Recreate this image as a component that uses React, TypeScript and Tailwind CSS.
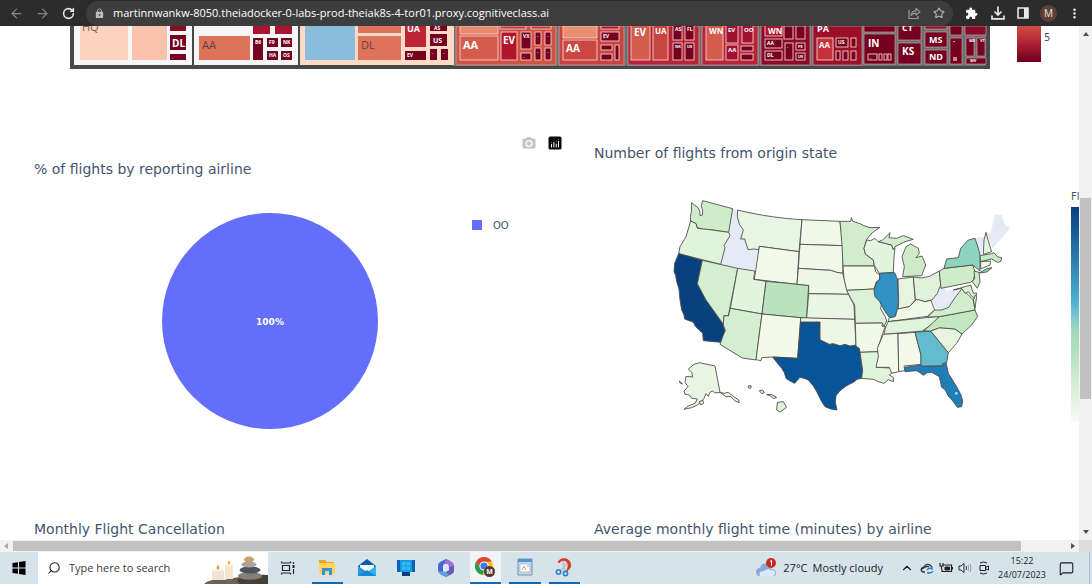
import React from "react";
import { ArrowLeft, ArrowRight, RotateCw, Star, Search, ChevronUp, MessageSquare } from "lucide-react";
import { MdLock, MdExtension, MdMoreVert } from "react-icons/md";

type Box = [number, number, number, number, string, string?, number?, string?];

const D = "#75001f";
const W = "#ffffff";

const sections: Box[] = [
  [74, 26, 118, 39, "#f7f6f6"],
  [194, 26, 104, 39, "#f7f6f6"],
  [300, 26, 154, 39, "#fbdac6"],
  [456, 26, 100, 39, "#cf5246"],
  [559, 26, 65, 39, "#c84440"],
  [628, 26, 71, 39, "#b3243a"],
  [702, 26, 56, 39, "#b8233a"],
  [761, 26, 49, 39, "#8b0a27"],
  [813, 26, 49, 39, "#9b1028"],
  [864, 26, 31, 6, D],
  [864, 34, 31, 30, D],
  [898, 26, 23, 14, D],
  [898, 43, 23, 21, D],
  [925, 26, 22, 3, "#9b1028"],
  [925, 32, 22, 15, D],
  [925, 50, 22, 14, D],
  [950, 26, 12, 9, D],
  [950, 38, 12, 26, D],
  [965, 26, 21, 9, "#8b0a27"],
  [966, 38, 8, 18, D],
  [977, 38, 8, 18, D],
  [966, 58, 20, 6, D],
];

const plainTiles: Box[] = [
  [80, 26, 48, 34, "#fdd2bf"],
  [132, 26, 35, 34, "#f8c3aa"],
  [170, 26, 16, 5, "#8b0a27"],
  [170, 35, 16, 15, D, "DL", 10],
  [170, 54, 16, 6, D, "-", 4],
  [199, 36, 51, 24, "#de735c", "AA", 11, "#5b4540"],
  [253, 26, 17, 8, "#a91530"],
  [275, 26, 17, 8, "#a91530"],
  [253, 38, 10, 22, D, "B6", 5],
  [267, 38, 11, 9, D, "F9", 5],
  [281, 38, 11, 9, D, "NK", 5],
  [267, 51, 11, 9, D, "HA", 5],
  [281, 51, 11, 9, D, "OS", 5],
  [305, 26, 50, 34, "#89bddb"],
  [358, 26, 43, 7, "#df725b"],
  [358, 36, 43, 24, "#df725b", "DL", 11, "#5b4540"],
  [405, 26, 21, 21, "#bd2536"],
  [405, 51, 21, 9, D, "EV", 5],
  [430, 26, 17, 5, D],
  [430, 34, 17, 12, D, "US", 7],
  [430, 49, 7, 11, D, "-", 4],
  [441, 49, 7, 11, D, "-", 4],
];

const linedTiles: Box[] = [
  [460, 26, 38, 8, "#e58a6d"],
  [460, 36, 38, 24, "#d35c4c", "AA", 11],
  [500, 26, 26, 3, "#c23a3c"],
  [531, 26, 20, 3, "#c23a3c"],
  [501, 32, 16, 28, "#b0172c", "EV", 10],
  [521, 32, 10, 17, D, "VX", 5],
  [521, 53, 10, 7, D, "-", 4],
  [535, 32, 6, 13, D, "-", 4],
  [545, 32, 6, 13, D, "-", 4],
  [535, 48, 6, 12, D, "-", 4],
  [545, 48, 6, 12, D, "-", 4],
  [563, 26, 34, 12, "#e88f70"],
  [563, 40, 34, 20, "#cc4743", "AA", 10],
  [601, 26, 18, 3, "#a01030"],
  [601, 32, 18, 9, D, "EV", 5],
  [601, 45, 11, 5, D],
  [601, 54, 11, 6, D],
  [615, 45, 4, 15, D],
  [631, 20, 19, 40, "#d35c4c", "EV", 10],
  [653, 20, 15, 40, "#c74640", "UA", 8],
  [673, 20, 9, 20, D],
  [685, 20, 9, 20, D],
  [673, 43, 9, 17, D, "NK", 4],
  [685, 43, 9, 17, D, "US", 4],
  [706, 20, 17, 40, "#d35c4c", "WN", 8],
  [726, 20, 12, 23, "#a01030", "EV", 6],
  [742, 20, 11, 23, "#a01030", "OO", 6],
  [726, 45, 12, 15, "#a01030", "AA", 6],
  [741, 46, 12, 5, D],
  [741, 54, 12, 6, D],
  [765, 20, 17, 16, "#a91530", "WN", 8],
  [765, 39, 17, 9, D, "AA", 5],
  [765, 51, 17, 9, D, "DL", 5],
  [784, 26, 9, 13, D],
  [796, 26, 9, 13, D],
  [785, 43, 8, 17, D, "-", 4],
  [796, 43, 9, 7, D, "F9", 4],
  [796, 53, 9, 7, D, "US", 4],
  [817, 38, 16, 22, "#c5303a", "AA", 8],
  [836, 38, 12, 9, D, "US", 5],
  [851, 38, 5, 9, D],
  [836, 51, 4, 9, D],
  [843, 51, 5, 9, D],
  [851, 51, 5, 9, D],
  [868, 54, 9, 6, D, "-", 4],
  [879, 54, 3, 6, D],
  [884, 54, 3, 6, D],
  [888, 54, 3, 6, D],
];

const stateLabels: [number, number, string, number, string][] = [
  [82, 31, "HQ", 11, "#75605a"],
  [407, 32, "UA", 9, W],
  [434, 30, "AS", 5, W],
  [675, 31, "AS", 5, W],
  [687, 31, "FL", 5, W],
  [817, 32, "PA", 9, W],
  [868, 47, "IN", 10, W],
  [902, 31, "CT", 9, W],
  [902, 55, "KS", 10, W],
  [929, 43, "MS", 9, W],
  [929, 60, "ND", 9, W],
  [953, 43, "-", 6, W],
  [953, 61, "II", 6, W],
  [969, 42, "ME", 4, W],
  [980, 42, "VT", 4, W],
  [970, 62, "WV", 4, W],
];

function TileLabel({ b }: { b: Box }) {
  if (!b[5]) return null;
  const size = b[6] ?? 8;
  const tall = b[1] < 26;
  return (
    <text
      x={b[0] + (size > 5 && b[2] > 16 ? 3 : 2)}
      y={(tall ? 26 : b[1]) + (tall ? size : size + (size > 6 ? 2 : 1))}
      fontSize={size}
      fontWeight={b[7] ? 400 : 700}
      fill={b[7] ?? W}
    >
      {b[5]}
    </text>
  );
}

function Treemap() {
  return (
    <svg viewBox="70 26 920 43" className="h-[43px] w-[920px] shrink-0" fontFamily="'Open Sans', sans-serif" role="img" aria-label="Treemap of flights by state and airline">
      <rect x="70" y="26" width="920" height="43" fill="#484848" />
      <rect x="452" y="26" width="534" height="40" fill="#6e6e6e" />
      {sections.map((b, i) => (
        <rect key={i} x={b[0]} y={b[1]} width={b[2]} height={b[3]} fill={b[4]} stroke={i > 2 ? "#e5c9c9" : "none"} strokeWidth="0.5" />
      ))}
      {plainTiles.map((b, i) => (
        <g key={i}>
          <rect x={b[0]} y={b[1]} width={b[2]} height={b[3]} fill={b[4]} />
          <TileLabel b={b} />
        </g>
      ))}
      {linedTiles.map((b, i) => (
        <g key={i}>
          <rect x={b[0]} y={b[1]} width={b[2]} height={b[3]} fill={b[4]} stroke="#f5cdc6" strokeWidth="0.9" />
          <TileLabel b={b} />
        </g>
      ))}
      {stateLabels.map((t, i) => (
        <text key={i} x={t[0]} y={t[1]} fontSize={t[3]} fill={t[4]} fontWeight={t[4] === W ? 700 : 400}>
          {t[2]}
        </text>
      ))}
    </svg>
  );
}

const states: [string, string][] = [
  ["#cfecc9", "M95,52L103,60L112,66L119,76L120,92L127,90L128,76L124,62L128,47L218,71L206,142L150,134L130,133L112,128L108,116L92,108L91,97L94,80Z"],
  ["#e0f3db", "M92,108L108,116L112,130L150,134L206,142L210,152L192,182L195,188L182,238L56,206L60,185L78,155Z"],
  ["#08417f", "M56,206L127,226L112,296L138,345L188,415L196,438L190,450L182,472L130,467L128,445L106,424L100,412L74,402L72,390L65,375L60,345L57,312L50,290L47,272L42,258L44,235Z"],
  ["#d5eecf", "M127,226L233,250L205,393L192,392L190,420L188,415L138,345L112,296Z"],
  ["#e8f5e2", "M233,75C300,92 380,102 426,104L417,200L298,184L296,194L280,192L264,194L254,162L242,162L250,135L238,118L232,95Z"],
  ["#f3f9e9", "M298,184L417,200L411,298L283,283Z"],
  ["#e3f4de", "M233,250L284,258L281,283L318,289L306,387L211,370Z"],
  ["#b8e3bd", "M318,289L446,301L440,400L306,387Z"],
  ["#d5eecf", "M211,370L306,387L288,525L247,519L180,478L190,450L196,436L190,420L192,392L205,393Z"],
  ["#f3f9e9", "M306,387L422,398L413,520L338,516L305,518L303,527L288,524Z"],
  ["#075499", "M422,411L480,411L480,464L508,478L520,476L540,482L555,478L570,483L588,480L600,490L602,525L608,555L605,580L592,583L580,592L560,602L540,617L528,632L526,652L531,675L512,672L495,665L485,650L480,640L470,620L460,603L445,585L432,580L420,577L404,595L390,588L378,580L373,563L365,550L350,532L338,516L413,520Z"],
  ["#f0f8e8", "M426,104L540,109L545,150L549,182L420,178Z"],
  ["#f0f8e8", "M420,178L549,182L549,243L548,265L530,262L512,256L415,250Z"],
  ["#eef7e6", "M415,250L512,256L530,262L548,265L560,310L566,328L446,326L446,301L411,298Z"],
  ["#eaf6e4", "M446,326L566,328L572,340L582,360L584,403L440,400Z"],
  ["#eef7e6", "M422,398L584,403L588,480L570,483L555,478L540,482L520,476L508,478L480,464L480,411L422,411Z"],
  ["#d2edcc", "M540,109L572,109L574,98L579,109L600,116L612,122L630,128L660,127L645,137L632,148L620,163L612,190L616,207L640,225L643,243L549,243L546,180Z"],
  ["#f3f9e9", "M549,243L643,243L648,262L660,270L658,285L648,292L642,312L560,316L552,280Z"],
  ["#dcf1d6", "M560,316L642,312L648,330L664,358L662,372L676,395L680,408L672,424L666,414L586,415L584,360L572,340Z"],
  ["#f0f8e8", "M586,415L668,414L666,424L676,424L668,445L657,480L655,500L600,502L598,490L588,484Z"],
  ["#e0f3db", "M600,502L655,500L656,520L650,547L693,549L697,562L688,570L700,577L700,590L685,584L672,595L655,590L640,583L605,580L608,555Z"],
  ["#e3f4de", "M620,165L632,167L645,160L655,170L695,180L700,192L705,188L702,215L700,262L658,265L643,242L640,225L616,207L612,190Z"],
  ["#d2edcc", "M655,170L668,165L690,143L687,158L710,160L730,152L760,163L735,170L705,185L700,195L695,180Z"],
  ["#cfecc9", "M728,275L733,245L726,215L738,185L752,177L775,190L778,205L768,218L786,213L797,240L785,272Z"],
  ["#3292c5", "M658,265L704,263L712,282L716,350L712,370L706,395L688,398L672,375L660,350L645,335L642,318L650,290L660,282Z"],
  ["#e6f5e0", "M714,282L760,276L766,345L748,365L715,372L716,350Z"],
  ["#dff2d9", "M760,276L785,279L808,274L838,258L842,300L832,325L816,345L795,350L766,343Z"],
  ["#f0f8e8", "M684,410L688,398L706,395L712,372L748,365L770,343L795,350L813,346L824,375L802,394Z"],
  ["#e0f3db", "M684,410L836,394L828,410L806,425L788,438L672,448L676,430Z"],
  ["#f3f9e9", "M670,448L714,445L716,560L695,565L688,547L648,547L655,515L652,490Z"],
  ["#f3f9e9", "M714,446L765,442L783,510L783,538L732,543L735,557L716,560Z"],
  ["#63bccd", "M765,442L812,438L865,503L860,533L845,542L788,544L783,538L783,510Z"],
  ["#1f7db7", "M735,547L783,540L788,544L845,544L848,536L858,533L865,565L890,605L903,630L908,648L905,665L892,667L880,650L865,633L856,615L845,607L838,575L815,562L802,563L790,571L780,563L770,557L735,560Z"],
  ["#e6f5e0", "M812,438L838,428L862,430L885,432L906,447L890,475L865,503Z"],
  ["#c3e7c0", "M790,437L806,425L838,395L945,375L953,395L935,420L906,447L885,432L838,428L812,438Z"],
  ["#d2edcc", "M802,396L824,375L845,375L866,367L880,345L905,312L920,325L940,345L945,375L838,395Z"],
  ["#cfecc9", "M838,258L852,250L938,240L946,262L940,285L932,292L843,310Z"],
  ["#8cd4bd", "M852,250L860,222L895,218L902,190L925,165L945,160L955,190L960,210L960,258L938,240Z"],
  ["#e8f5e2", "M978,142L984,165L995,200L970,208L972,165Z"],
  ["#c6e9c2", "M960,212L995,206L1002,203L1012,215L1025,218L1022,230L1012,232L995,222L962,230Z"],
  ["#f0f8e8", "M962,230L992,228L990,240L962,252Z"],
  ["#8cd4bd", "M957,264L978,252L996,248L980,261Z"],
  ["#cfecc9", "M942,258L957,262L960,290L952,310L937,290L944,280Z"],
  ["#d9f0d3", "M880,315L932,300L940,325L950,324L947,342L935,334L925,320L915,325L905,310Z"],
  ["#d2edcc", "M940,345L946,330L950,335L945,370Z"],
  ["#e8f5e2", "M85,552L102,538L118,533L165,543L180,622L165,624L158,618L150,622L145,634L138,626L132,640L122,652L112,660L95,668L72,673L85,663L105,655L112,642L95,640L88,630L75,628L72,618L84,605L75,592L78,574L98,576L95,562Z"],
  ["#eef7e6", "M180,622L192,625L205,622L220,634L236,645L238,653L225,648L212,634L198,635Z"],
  ["#eef7e6", "M58,588L68,597L60,594Z"],
  ["#dff2d9", "M118,650L128,645L131,655L122,660Z"],
  ["#dff2d9", "M352,652L370,650L380,667L360,681L350,675Z"],
  ["#dff2d9", "M265,602L274,603L272,610L265,608Z"],
  ["#dff2d9", "M298,617L308,615L313,623L305,626Z"],
  ["#dff2d9", "M320,629L334,628L350,637L341,641L332,633Z"],
];

const missing = [
  "M218,71L233,75L232,95L238,118L250,135L242,162L254,162L264,194L296,192L284,258L182,238L195,188L192,182L210,152L206,142Z",
  "M835,325L842,300L860,318L905,308L880,345L866,367L845,375L825,368L816,345Z",
  "M980,146L992,145L1005,88L1025,90L1034,118L1050,130L1020,165L998,190Z",
  "M945,160L972,155L967,206L960,210Z",
];

function UsMap() {
  return (
    <svg viewBox="0 0 1080 720" className="h-60 w-[360px] shrink-0" role="img" aria-label="Map of flights from origin state">
      {missing.map((d) => (
        <path key={d} d={d} fill="#e4eaf6" />
      ))}
      {states.map(([fill, d]) => (
        <path key={d} d={d} fill={fill} stroke="#4a4a4a" strokeWidth="2.6" strokeLinejoin="round" />
      ))}
      <circle cx="889" cy="625" r="4" fill="#b9dff0" />
    </svg>
  );
}

function BrowserBar() {
  return (
    <header className="flex h-[26px] shrink-0 items-center bg-[#2c2c2c] text-[#e8e8e8]">
      <button aria-label="Back" className="ml-2 flex w-4 justify-center text-[#858585]"><ArrowLeft size={15} /></button>
      <button aria-label="Forward" className="ml-[10px] flex w-4 justify-center text-[#858585]"><ArrowRight size={15} /></button>
      <button aria-label="Reload" className="ml-[10px] flex w-4 justify-center"><RotateCw size={13} strokeWidth={2.8} /></button>
      <div className="ml-[10px] flex h-[25px] min-w-0 flex-1 items-center rounded-full bg-[#3d3d3d] pl-2">
        <MdLock size={11} className="shrink-0 text-[#bdbdbd]" />
        <input
          aria-label="Address"
          readOnly
          defaultValue="martinnwankw-8050.theiadocker-0-labs-prod-theiak8s-4-tor01.proxy.cognitiveclass.ai"
          className="ml-2 h-5 min-w-0 flex-1 bg-transparent font-['Open_Sans',sans-serif] text-[11px] leading-5 font-normal text-white outline-none"
        />
        <button aria-label="Share" className="mr-3 text-[#9a9a9a]">
          <svg viewBox="0 0 14 14" className="size-[14px]" fill="none" stroke="currentColor" strokeWidth="1.2">
            <path d="M2 4V12.5H11V10" />
            <path d="M4 9.5C4.5 6 7 4.800 9 4.800V2.500L13 5.900L9 9V7.200C7 7.200 5.500 7.500 4 9.500Z" strokeLinejoin="round" />
          </svg>
        </button>
        <button aria-label="Bookmark" className="mr-2 text-[#b9b9b9]"><Star size={12} strokeWidth={2.2} /></button>
      </div>
      <button aria-label="Extensions" className="ml-3 text-white"><MdExtension size={13} /></button>
      <button aria-label="Downloads" className="ml-[13px]">
        <svg viewBox="0 0 14 14" className="size-[14px]" fill="none" stroke="currentColor" strokeWidth="1.7">
          <path d="M7 0.500V8.500M3.500 5.500L7 9L10.500 5.500M1 9.500V12.800H13V9.500" />
        </svg>
      </button>
      <button aria-label="Side panel" className="ml-3">
        <svg viewBox="0 0 12 12" className="size-3">
          <path d="M1 1H11V11H1Z" fill="none" stroke="currentColor" strokeWidth="1.600" />
          <path d="M7 1H11V11H7Z" fill="currentColor" />
        </svg>
      </button>
      <button aria-label="Profile" className="ml-[11px] size-[17px] rounded-full bg-[#5d4037] font-['Open_Sans',sans-serif] text-[10px] leading-[17px] text-[#f0e6e2]">M</button>
      <button aria-label="Menu" className="mx-[10px]"><MdMoreVert size={15} /></button>
    </header>
  );
}

function Dashboard() {
  return (
    <main className="min-w-0 flex-1 overflow-hidden bg-white font-['DejaVu_Sans',sans-serif] text-[#44546c]">
      <section className="flex pl-[70px]">
        <Treemap />
        <div className="ml-[27px] h-9 w-6 shrink-0 bg-linear-to-b from-[#cf4f48] via-[#ad1f32] to-[#6d001f]" />
        <span className="ml-[3px] pt-1 text-[10px] leading-4">5</span>
      </section>
      <div className="grid grid-cols-[minmax(0,560fr)_minmax(0,485fr)] pl-[34px]">
        <section className="h-[452px]">
          <div className="flex items-center justify-end gap-3 pt-[67px] pr-8">
            <button aria-label="Download plot as a png" className="text-[#c4c4c4]">
              <svg viewBox="0 0 14 14" className="size-[14px]" fill="currentColor">
                <path fillRule="evenodd" d="M4.500 2L5.200 1H8.800L9.500 2.500H12Q13.500 2.500 13.500 4V11Q13.500 12.500 12 12.500H2Q0.500 12.500 0.500 11V4Q0.500 2.500 2 2.500H4.300ZM7 4A3.500 3.500 0 1 0 7 11A3.500 3.500 0 1 0 7 4ZM7 5.300A2.200 2.200 0 1 1 7 9.700A2.200 2.200 0 1 1 7 5.300Z" />
                <circle cx="7" cy="7.500" r="1" />
              </svg>
            </button>
            <button aria-label="Produced with Plotly">
              <svg viewBox="0 0 14 14" className="size-[14px]">
                <rect x="0.500" y="0.500" width="13" height="13" rx="1.500" fill="#0a0a0a" />
                <path d="M3.500 8.500V11M5.800 6.500V11M8.200 8V11M10.500 5.500V11" stroke="#fff" strokeWidth="1" strokeLinecap="round" />
                <path d="M3.500 6.200V6.300M5.800 4.200V4.300M8.200 5.700V5.800M10.500 3.200V3.300" stroke="#999" strokeWidth="0.900" strokeLinecap="round" />
              </svg>
            </button>
          </div>
          <h2 className="mt-[11px] text-[14px] leading-4">% of flights by reporting airline</h2>
          <div className="mt-9 flex pl-32">
            <svg viewBox="0 0 216 216" className="size-[216px] shrink-0" role="img" aria-label="Pie chart">
              <circle cx="108" cy="108" r="108" fill="#636efa" />
              <text x="108" y="112" textAnchor="middle" fontSize="9" fontWeight="700" fill="#fff" fontFamily="'DejaVu Sans', sans-serif">100%</text>
            </svg>
            <div className="mt-1 ml-[94px] flex h-4 items-center gap-[11px] text-[10px]">
              <span className="size-[10px] bg-[#636efa]" />
              OO
            </div>
          </div>
        </section>
        <section className="h-[452px] overflow-hidden pt-[76px]">
          <h2 className="text-[14px] leading-4">Number of flights from origin state</h2>
          <div className="mt-6 flex pl-[66px]">
            <UsMap />
            <div className="ml-auto w-2 shrink-0 overflow-hidden pt-1 text-[10px] leading-4 whitespace-nowrap">
              Fl
              <div className="mt-0.5 h-[215px] bg-linear-to-b from-[#084081] via-[#4eb3d3] via-45% to-[#f7fcf0]">
                <div className="h-full bg-linear-to-b from-transparent from-45% via-[#a8ddb5] via-62% to-[#f7fcf0]" />
              </div>
            </div>
          </div>
        </section>
        <h2 className="text-[14px] leading-4">Monthly Flight Cancellation</h2>
        <h2 className="text-[14px] leading-4 whitespace-nowrap">Average monthly flight time (minutes) by airline</h2>
      </div>
    </main>
  );
}

const Triangle = ({ d, className = "text-[#505050]" }: { d: string; className?: string }) => (
  <svg viewBox="0 0 8 8" className={"size-2 shrink-0 " + className} fill="currentColor"><path d={d} /></svg>
);

function Icon({ name }: { name: string }) {
  switch (name) {
    case "Task View":
      return (
        <svg viewBox="0 0 16 16" className="size-4" fill="none" stroke="#222" strokeWidth="1.200">
          <path d="M1.500 3H10.500M1.500 13H10.500M2.500 5.500H9.500V10.500H2.500ZM1.500 1.500V3M10.500 1.500V3M1.500 13V14.500M10.500 13V14.500M13.500 2V4M13.500 9V14" />
          <path d="M12.500 5H14.500V8H12.500Z" fill="#222" stroke="none" />
        </svg>
      );
    case "File Explorer":
      return (
        <svg viewBox="0 0 18 18" className="size-[18px]">
          <path d="M1 2H7L9 4H16V15H1Z" fill="#e9a91f" />
          <path d="M1 5H17V16H1Z" fill="#ffd55d" />
          <path d="M4 10H14V17H11V13H7V17H4Z" fill="#3a91d8" />
        </svg>
      );
    case "Mail":
      return (
        <svg viewBox="0 0 20 20" className="size-5">
          <path d="M1 8L10 1L19 8V18H1Z" fill="#0f5da8" />
          <path d="M3 7H17V15H3Z" fill="#f4fbff" />
          <path d="M1 8L10 14L1 18Z" fill="#1d9be0" />
          <path d="M19 8L10 14L19 18Z" fill="#29b6f0" />
          <path d="M1 18L10 12L19 18Z" fill="#1688d2" />
        </svg>
      );
    case "My PC":
      return (
        <svg viewBox="0 0 20 20" className="size-5">
          <path d="M1 2H19V14H1Z" fill="#0c62b3" />
          <path d="M6 14H14V18H6Z" fill="#083e80" />
          <path d="M4 2H16V14H4Z" fill="#159be0" />
          <path d="M6 4H9.500V7.500H6ZM10.500 4H14V7.500H10.500ZM6 8.500H9.500V12H6ZM10.500 8.500H14V12H10.500Z" fill="#38b8f0" />
        </svg>
      );
    case "Microsoft 365":
      return (
        <svg viewBox="0 0 20 20" className="size-5">
          <path d="M10 1L4 4Q2 5 2 8V13L7 15V7L14 3Z" fill="#4b64cf" />
          <path d="M10 1L16 4Q18 5 18 8V12L12 9V6L8 6Z" fill="#9b72d4" />
          <path d="M18 8V13Q18 15 16 16L10 19L4 16L2 13L9 14L13 12V9Z" fill="#655dbc" />
          <path d="M2 13L9 14L13 16L10 19L4 16Z" fill="#5ea2e6" />
          <path d="M7 8L10 6L13 8V12L10 14L7 12Z" fill="#dbe7ee" />
        </svg>
      );
    case "Chrome":
      return (
        <svg viewBox="0 0 22 22" className="size-[22px]">
          <circle cx="10" cy="10" r="9" fill="#fbc116" />
          <path d="M2.200 5.500A9 9 0 0 1 17.800 5.500L10 6L6 12Z" fill="#dd4336" />
          <path d="M2.200 5.500L6.500 12.500L10 14L8.500 19A9 9 0 0 1 2.200 5.500Z" fill="#279c52" />
          <circle cx="10" cy="10" r="4.600" fill="#fff" />
          <circle cx="10" cy="10" r="3.600" fill="#377fe7" />
          <circle cx="15.500" cy="15.500" r="5.500" fill="#54382e" />
          <text x="15.500" y="18" textAnchor="middle" fontSize="7" fontWeight="700" fill="#fff" fontFamily="'Open Sans', sans-serif">M</text>
        </svg>
      );
    case "Document":
      return (
        <svg viewBox="0 0 18 20" className="h-5 w-[18px]">
          <path d="M2 2H16V18H2Z" fill="#c9d8e6" stroke="#7590a9" />
          <path d="M2 2H16V5H2Z" fill="#4c97cb" />
          <path d="M4 7H14V15H4Z" fill="#fff" stroke="#8db1ce" strokeWidth="0.700" />
          <path d="M6 13L8 9L10 13" stroke="#d88a5c" strokeWidth="0.900" fill="none" />
          <path d="M11 9H13" stroke="#6597bb" />
        </svg>
      );
    default:
      return (
        <svg viewBox="0 0 20 20" className="size-5" fill="none">
          <path d="M4 5C6 1 13 0 16 5C18 10 15 13 12 15C14 11 15 8 13 5C11 3 7 3 5 6Z" fill="#cf3d28" stroke="#cf3d28" strokeWidth="0.800" />
          <path d="M9 5L11 15M13 6L6 15" stroke="#b7c1ca" strokeWidth="1.500" />
          <circle cx="4.500" cy="15" r="2.200" stroke="#2e82c9" strokeWidth="1.600" />
          <circle cx="11.500" cy="16.500" r="2.100" stroke="#2e82c9" strokeWidth="1.600" />
        </svg>
      );
  }
}

const apps: [string, string][] = [
  ["Task View", ""],
  ["File Explorer", "border-b-2 border-[#1269b5]"],
  ["Mail", ""],
  ["My PC", ""],
  ["Microsoft 365", ""],
  ["Chrome", "border-b-2 border-[#1269b5] bg-[#f0f5f8]"],
  ["Document", "border-b-2 border-[#1269b5]"],
  ["Snipping Tool", "border-b-2 border-[#1269b5]"],
];

function Taskbar() {
  return (
    <footer className="flex h-8 shrink-0 items-center bg-[#d6e3ea] font-['Open_Sans',sans-serif] text-[#1b1b1b]">
      <button aria-label="Start" className="flex w-[38px] shrink-0 justify-center">
        <svg viewBox="0 0 14 14" className="size-[14px]"><path d="M0.500 2L6 1.200V6.600H0.500ZM7 1L13.500 0V6.600H7ZM0.500 7.400H6V12.800L0.500 12ZM7 7.400H13.500V14L7 13Z" /></svg>
      </button>
      <label className="flex h-8 w-[230px] shrink-0 items-center bg-white pl-[9px]">
        <Search size={14} strokeWidth={1.8} className="shrink-0 -scale-x-100" />
        <input aria-label="Search" placeholder="Type here to search" className="ml-2 min-w-0 flex-1 text-[11px] outline-none placeholder:text-[#3b3b3b]" />
        <svg viewBox="0 0 64 32" className="h-8 w-16 shrink-0">
          <path d="M0 32Q6 26 20 28Q35 24 64 23V32Z" fill="#6c6256" />
          <path d="M33 27Q50 22 64 23V32H35Z" fill="#463f36" />
          <path d="M8 18H20V28H8Z" fill="#efe3d3" />
          <path d="M21 13H29V27H21Z" fill="#f5e5cd" />
          <ellipse cx="14" cy="18" rx="6" ry="1.500" fill="#fff6df" />
          <ellipse cx="25" cy="13" rx="4" ry="1.200" fill="#fff6df" />
          <path d="M14 18Q11 15.500 14 13Q17 15.500 14 18M25 13Q23 10.500 25 8.500Q27 10.500 25 13" fill="#f29b38" />
          <ellipse cx="46" cy="24" rx="12" ry="3.800" fill="#827f7b" />
          <ellipse cx="46" cy="18" rx="10.500" ry="3.500" fill="#4f535a" />
          <ellipse cx="45" cy="12.500" rx="7.500" ry="3" fill="#a7a39d" />
          <ellipse cx="45" cy="7.500" rx="5" ry="3" fill="#cc9e68" />
        </svg>
      </label>
      <nav className="grid h-8 w-[316px] shrink-0 grid-cols-8">
        {apps.map(([name, cls]) => (
          <button key={name} aria-label={name} className={"mx-1 flex items-center justify-center " + cls}><Icon name={name} /></button>
        ))}
      </nav>
      <button className="ml-auto flex shrink-0 items-center gap-[5px] text-[11px] whitespace-nowrap">
        <svg viewBox="0 0 22 22" className="size-[22px]">
          <path d="M4 19A4 4 0 0 1 4 11Q6 5 11 7Q15 8 15 12Q20 12 20 16Q20 19 17 19Z" fill="#88abdf" />
          <path d="M4 19Q2 14 8 14Q12 11 15 13Q20 13 19 17L17 19Z" fill="#dce9fa" />
          <circle cx="15" cy="6" r="5" fill="#c52b22" />
          <path d="M14 4.500L15.500 3.300V8.500" stroke="#fff" fill="none" />
        </svg>
        <span>27°C</span>
        <span>Mostly cloudy</span>
      </button>
      <button aria-label="Show hidden icons" className="ml-[17px] shrink-0"><ChevronUp size={14} strokeWidth={2} /></button>
      <button aria-label="OneDrive" className="ml-1.5 shrink-0">
        <svg viewBox="0 0 14 14" className="size-[14px]" fill="none" stroke="#333" strokeWidth="1.300">
          <path d="M5 11H3Q0.500 10 1.500 7.500Q3 6 4 6Q6 2 10 4L12 6M2 8Q7 4 9 6" />
          <path d="M7 9Q9 6 12 8V6M13 10Q11 13 8 11.500V13" stroke="#2378bd" />
        </svg>
      </button>
      <button aria-label="Battery" className="ml-[5px] shrink-0">
        <svg viewBox="0 0 14 12" className="h-3 w-[14px]" fill="none" stroke="#222">
          <path d="M4 3H12.500V9.500H3V7M13.500 5V7.500M1 1V4H4V1M2.500 4V7" strokeWidth="1.200" />
          <path d="M6 5H10.500V8H6Z" fill="#222" />
        </svg>
      </button>
      <button aria-label="Volume" className="ml-[5px] shrink-0">
        <svg viewBox="0 0 14 12" className="h-3 w-[14px]" fill="none" stroke="#333">
          <path d="M1 4H3L6 1.500V10.500L3 8H1Z" />
          <path d="M8 4Q9 6 8 8" />
          <path d="M10 3Q11.500 6 10 9M12 2Q14 6 12 10" stroke="#929ba0" />
        </svg>
      </button>
      <button aria-label="Meet now" className="ml-[6px] shrink-0">
        <svg viewBox="0 0 12 14" className="h-[14px] w-3" fill="none" stroke="#222">
          <path d="M2 4.500H7.500V9.500H2ZM7.500 6.500L10.500 5V9L7.500 7.800M2 2Q5 0 9 2M2 12Q5 14 9 12" />
        </svg>
      </button>
      <time className="ml-[7px] w-[50px] shrink-0 text-center text-[9px] leading-[14px] whitespace-nowrap">15:22<br />24/07/2023</time>
      <button aria-label="Notifications" className="mr-[15px] ml-3 shrink-0"><MessageSquare size={15} strokeWidth={1.7} /></button>
      <span className="mr-[2px] h-8 w-px bg-[#aebdc5]" />
    </footer>
  );
}

export default function App() {
  return (
    <div className="flex h-screen w-full flex-col overflow-hidden">
      <BrowserBar />
      <div className="flex min-h-0 flex-1">
        <Dashboard />
        <div className="flex w-[13px] shrink-0 flex-col items-center bg-[#f1f1f1] py-1">
          <Triangle d="M1 6L4 2L7 6Z" />
          <div className="grow-[160]" />
          <div className="w-[11px] grow-[201] bg-[#c1c1c1]" />
          <div className="grow-[129]" />
          <Triangle d="M1 2L4 6L7 2Z" />
        </div>
      </div>
      <div className="flex h-3 shrink-0 bg-[#f1f1f1]">
        <div className="flex flex-1 items-center px-[2px]">
          <Triangle d="M6 1L2 4L6 7Z" className="text-[#a8a8a8]" />
          <div className="w-[3px]" />
          <div className="h-[10px] grow-[1008] bg-[#c1c1c1]" />
          <div className="grow-[48]" />
          <Triangle d="M2 1L6 4L2 7Z" />
        </div>
        <div className="w-[13px] bg-[#dcdcdc]" />
      </div>
      <Taskbar />
    </div>
  );
}
